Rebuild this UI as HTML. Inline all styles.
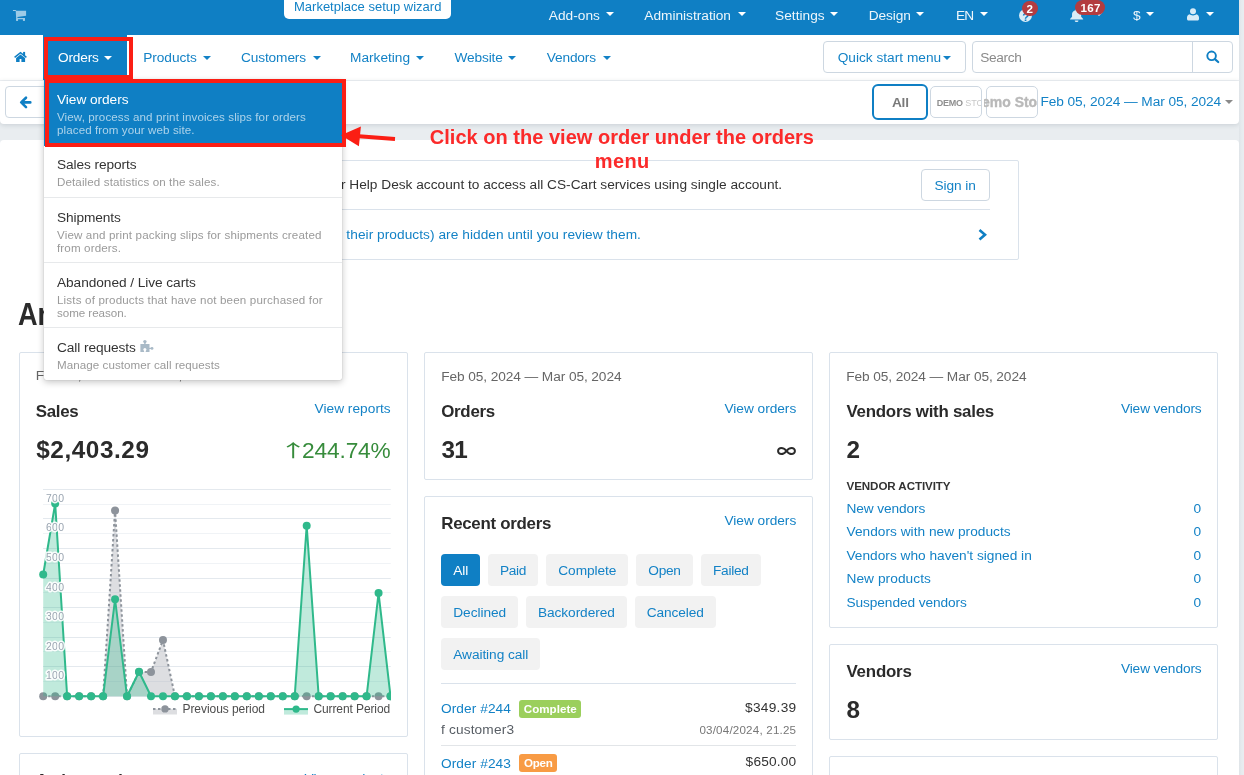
<!DOCTYPE html>
<html lang="en">
<head>
<meta charset="utf-8">
<title>Dashboard - Administration panel</title>
<style>
html,body{margin:0;padding:0}
body{width:1244px;height:775px;overflow:hidden;background:#e9edf0;font-family:"Liberation Sans",Arial,sans-serif;font-size:13px;position:relative}
.b{position:absolute;box-sizing:border-box;display:block}
.t{position:absolute;display:block;white-space:nowrap;height:20px;line-height:20px;margin:0;padding:0;font-weight:normal;text-decoration:none;font-style:normal}
#page{position:absolute;left:0;top:0;width:1239px;height:775px;overflow:hidden;will-change:transform}
ul,li{list-style:none;margin:0;padding:0}
</style>
</head>
<body>
<div id="page">
<header id="topbar"><div class="b" style="left:0px;top:0px;width:1239px;height:35px;background:#0f7fc4"></div>
<svg class="b" style="left:12px;top:9px;" width="15" height="13" viewBox="12 9 15 13" preserveAspectRatio="none"><g fill="#9ccbe7"><path d="M12.900 9.900h2.800l.7 1.100H13z"/><path d="M15.700 10.700h10.400v5L17.400 16.900l.2 1h7.400v1.300H16.200z"/><rect x="16" y="18.800" width="2.100" height="2.100" rx=".6"/><rect x="22.900" y="18.800" width="2.100" height="2.100" rx=".6"/></g></svg>
<a class="b" style="left:283.75px;top:0px;width:167.5px;height:18.75px;background:#fff;border-radius:0 0 5px 5px"></a>
<a class="t" style="left:294px;top:-3px;font-size:13px;color:#1382c6;">Marketplace setup wizard</a>
<a class="t" style="left:548.75px;top:6px;font-size:13.7px;color:#eef6fb;letter-spacing:0.03px;">Add-ons</a>
<i class="b" style="left:606px;top:12px;border-left:4px solid transparent;border-right:4px solid transparent;border-top:4px solid #fff"></i>
<a class="t" style="left:644.25px;top:6px;font-size:13.7px;color:#eef6fb;">Administration</a>
<i class="b" style="left:737.5px;top:12px;border-left:4px solid transparent;border-right:4px solid transparent;border-top:4px solid #fff"></i>
<a class="t" style="left:775px;top:6px;font-size:13.7px;color:#eef6fb;letter-spacing:0.03px;">Settings</a>
<i class="b" style="left:830px;top:12px;border-left:4px solid transparent;border-right:4px solid transparent;border-top:4px solid #fff"></i>
<a class="t" style="left:868.75px;top:6px;font-size:13.7px;color:#eef6fb;letter-spacing:-0.11px;">Design</a>
<i class="b" style="left:916px;top:12px;border-left:4px solid transparent;border-right:4px solid transparent;border-top:4px solid #fff"></i>
<a class="t" style="left:956px;top:6px;font-size:13.7px;color:#eef6fb;letter-spacing:-1px;">EN</a>
<i class="b" style="left:979.5px;top:12px;border-left:4px solid transparent;border-right:4px solid transparent;border-top:4px solid #fff"></i>
<div class="b" style="left:1019px;top:9px;width:13px;height:13px;background:#d9ecf7;border-radius:50%"></div>
<span class="t" style="left:1022.2px;top:7px;font-size:11.6px;color:#0f7fc4;font-weight:bold;">?</span>
<div class="b" style="left:1022px;top:1px;width:16px;height:15px;background:#b33c40;border-radius:8px"></div>
<span class="t" style="left:1026.5px;top:-1px;font-size:11.6px;color:#fff;font-weight:bold;">2</span>
<svg class="b" style="left:1068.85px;top:9px;" width="15.2" height="13" viewBox="0 0 26 26" preserveAspectRatio="none"><path fill="#d9ecf7" d="M13 0c1 0 1.8.8 1.8 1.8v.7c3.6.8 6 4 6 7.7v5.3l3.4 4.3v1.4H1.800v-1.4l3.400-4.300V10.200c0-3.700 2.400-6.900 6-7.700v-.7C11.200.8 12 0 13 0zM9.800 22.800h6.400c0 1.800-1.400 3.200-3.200 3.200s-3.200-1.400-3.200-3.200z"/></svg>
<i class="b" style="left:1094.5px;top:12px;border-left:4px solid transparent;border-right:4px solid transparent;border-top:4px solid #fff"></i>
<div class="b" style="left:1075.4px;top:0px;width:29.6px;height:15.2px;background:#b33c40;border-radius:8px"></div>
<span class="t" style="left:1080.5px;top:-2px;font-size:11.6px;color:#fff;font-weight:bold;letter-spacing:0.25px;">167</span>
<span class="t" style="left:1133px;top:6px;font-size:13.7px;color:#eef6fb;letter-spacing:-0.24px;">$</span>
<i class="b" style="left:1146px;top:12px;border-left:4px solid transparent;border-right:4px solid transparent;border-top:4px solid #fff"></i>
<svg class="b" style="left:1187px;top:8.4px;" width="12" height="12.6" viewBox="0 0 24 25" preserveAspectRatio="none"><circle cx="12" cy="6.500" r="6" fill="#d9ecf7"/><path fill="#d9ecf7" d="M5 12.500c2 1.500 4 2.200 7 2.200s5-.7 7-2.200c3 .8 5 3.300 5 6.500v3c0 1.700-1.300 3-3 3H3c-1.700 0-3-1.300-3-3v-3c0-3.200 2-5.700 5-6.500z"/></svg>
<i class="b" style="left:1206px;top:12px;border-left:4px solid transparent;border-right:4px solid transparent;border-top:4px solid #fff"></i></header>
<nav id="navbar"><div class="b" style="left:0px;top:35px;width:1239px;height:46px;background:#fff;border-bottom:1px solid #eef1f4"></div>
<svg class="b" style="left:13px;top:51px;" width="16" height="12" viewBox="13 51 16 12" preserveAspectRatio="none"><g fill="#0f7fc4"><path d="M14.600 57.300L20.500 52.700l5.900 4.600" fill="none" stroke="#0f7fc4" stroke-width="1.500"/><rect x="23.100" y="51.900" width="2" height="4.200"/><path d="M20.500 54.500l4.600 3.600V62h-3.700v-2.900h-1.800V62h-3.500v-3.900z"/></g></svg>
<div class="b" style="left:43px;top:35px;width:84px;height:45px;background:#0f7fc4"></div>
<a class="t" style="left:58px;top:48px;font-size:13.7px;color:#fff;letter-spacing:-0.19px;">Orders</a>
<i class="b" style="left:104px;top:56px;border-left:4px solid transparent;border-right:4px solid transparent;border-top:4px solid #fff"></i>
<a class="t" style="left:143.2px;top:48px;font-size:13.7px;color:#1382c6;letter-spacing:-0.04px;">Products</a>
<i class="b" style="left:203.4px;top:56px;border-left:4px solid transparent;border-right:4px solid transparent;border-top:4px solid #1382c6"></i>
<a class="t" style="left:241px;top:48px;font-size:13.7px;color:#1382c6;letter-spacing:-0.13px;">Customers</a>
<i class="b" style="left:312.5px;top:56px;border-left:4px solid transparent;border-right:4px solid transparent;border-top:4px solid #1382c6"></i>
<a class="t" style="left:350px;top:48px;font-size:13.7px;color:#1382c6;">Marketing</a>
<i class="b" style="left:415.75px;top:56px;border-left:4px solid transparent;border-right:4px solid transparent;border-top:4px solid #1382c6"></i>
<a class="t" style="left:454.5px;top:48px;font-size:13.7px;color:#1382c6;letter-spacing:-0.15px;">Website</a>
<i class="b" style="left:508px;top:56px;border-left:4px solid transparent;border-right:4px solid transparent;border-top:4px solid #1382c6"></i>
<a class="t" style="left:546.75px;top:48px;font-size:13.7px;color:#1382c6;letter-spacing:-0.15px;">Vendors</a>
<i class="b" style="left:602.5px;top:56px;border-left:4px solid transparent;border-right:4px solid transparent;border-top:4px solid #1382c6"></i>
<div class="b" style="left:823.4px;top:41px;width:142.5px;height:31.5px;border:1px solid #cdd7e1;border-radius:4px;background:#fff"></div>
<a class="t" style="left:837.7px;top:48px;font-size:13.7px;color:#1382c6;">Quick start menu</a>
<i class="b" style="left:943.4px;top:55.5px;border-left:4px solid transparent;border-right:4px solid transparent;border-top:4px solid #1382c6"></i>
<div class="b" style="left:972px;top:41px;width:261px;height:31.5px;border:1px solid #cdd7e1;border-radius:4px;background:#fff"></div>
<div class="b" style="left:1192px;top:41px;width:1px;height:31.5px;background:#cdd7e1"></div>
<span class="t" style="left:980.2px;top:48px;font-size:13.7px;color:#8a8a8a;letter-spacing:-0.32px;">Search</span>
<svg class="b" style="left:1205px;top:49px;" width="16" height="16" viewBox="0 0 16 16" preserveAspectRatio="none"><circle cx="6.600" cy="6.850" r="4.300" fill="none" stroke="#0f7fc4" stroke-width="1.900"/><path d="M9.900 10.100l3.300 2.900" stroke="#0f7fc4" stroke-width="2.200" stroke-linecap="round"/></svg></nav>
<section id="actions"><div class="b" style="left:0px;top:81px;width:1239px;height:42.5px;background:#fff;border-radius:0 0 4px 4px;box-shadow:0 1px 5px rgba(30,50,70,.16)"></div>
<a class="b" style="left:5px;top:86px;width:43px;height:32px;border:1px solid #cdd7e1;border-radius:4px;background:#fff"></a>
<svg class="b" style="left:16px;top:94px;" width="20" height="17" viewBox="16 94 20 17" preserveAspectRatio="none"><path d="M26 97.700l-4.800 4.700 4.800 4.700M21.500 102.400h8.800" fill="none" stroke="#0f7fc4" stroke-width="2.600" stroke-linecap="round" stroke-linejoin="round"/></svg>
<div class="b" style="left:872px;top:84px;width:55.5px;height:35.5px;border:2px solid #0f7fc4;border-radius:6px;background:#fff"></div>
<span class="t" style="left:892px;top:93px;font-size:13.7px;color:#7a7a7a;font-weight:bold;letter-spacing:-0.27px;">All</span>
<div class="b" style="left:930.3px;top:86px;width:51.4px;height:32px;border:1px solid #cdd7e1;border-radius:5px;background:#fff;overflow:hidden"><span class="t" style="left:5.400px;top:6px;font-size:9px;font-weight:bold;color:#8f8f8f;letter-spacing:-.2px">DEMO <span style="font-weight:normal;color:#c8c8c8;letter-spacing:0">STORE</span></span></div>
<div class="b" style="left:986.2px;top:86px;width:51.4px;height:32px;border:1px solid #cdd7e1;border-radius:5px;background:#fff"></div>
<div class="b" style="left:984px;top:88px;width:53px;height:28px;overflow:hidden"><span class="t" style="left:-12.400px;top:4px;font-size:15px;font-weight:bold;color:#b9b9b9;-webkit-text-stroke:.4px #b9b9b9;transform:scaleX(.93);transform-origin:0 0">Demo Store</span></div>
<a class="t" style="left:1040.4px;top:92px;font-size:13.7px;color:#1382c6;letter-spacing:-0.07px;">Feb 05, 2024 — Mar 05, 2024</a>
<i class="b" style="left:1225px;top:99.5px;border-left:4px solid transparent;border-right:4px solid transparent;border-top:4px solid #8a8a8a"></i></section>
<main id="content"><div class="b" style="left:0px;top:140px;width:1239px;height:660px;background:#fff;border-radius:4px 4px 0 0"></div>
<div class="b" style="left:221px;top:160px;width:797.5px;height:99.5px;border:1px solid #dae2eb;border-radius:2px"></div>
<p class="t" style="left:258px;top:175px;font-size:13.7px;color:#333;">Sign in to your Help Desk account to access all CS-Cart services using single account.</p>
<a class="b" style="left:921px;top:169px;width:68.5px;height:31.5px;border:1px solid #cdd7e1;border-radius:4px;background:#fff"></a>
<a class="t" style="left:934.5px;top:176px;font-size:13.7px;color:#1382c6;letter-spacing:-0.1px;">Sign in</a>
<div class="b" style="left:250px;top:209px;width:739.5px;height:1px;background:#dae2eb"></div>
<a class="t" style="left:250.5px;top:225px;font-size:13.7px;color:#1382c6;letter-spacing:0.05px;">2 vendors (and their products) are hidden until you review them.</a>
<svg class="b" style="left:977px;top:227.5px;" width="11" height="13.5" viewBox="0 0 11 13.500" preserveAspectRatio="none"><path d="M2.500 2l5.500 4.700-5.500 4.800" fill="none" stroke="#0f7fc4" stroke-width="2.600" stroke-linecap="butt" stroke-linejoin="miter"/></svg>
<h1 class="t" style="left:17.8px;top:304px;font-size:30.5px;color:#2b2b2b;font-weight:bold;transform:scaleX(.89);transform-origin:0 0;">Analytics</h1>
<div class="b" style="left:19px;top:352px;width:389px;height:385px;border:1px solid #dae2eb;border-radius:2px;background:#fff"></div>
<span class="t" style="left:35.75px;top:366px;font-size:13.7px;color:#666;letter-spacing:-0.09px;">Feb 05, 2024 — Mar 05, 2024</span>
<h2 class="t" style="left:35.75px;top:402px;font-size:16.9px;color:#2b2b2b;font-weight:bold;letter-spacing:-0.31px;">Sales</h2>
<a class="t" style="left:314.5px;top:399px;font-size:13.7px;color:#1382c6;letter-spacing:0.03px;">View reports</a>
<span class="t" style="left:36.25px;top:440px;font-size:24.3px;color:#2b2b2b;font-weight:bold;letter-spacing:0.57px;">$2,403.29</span>
<span class="t" style="left:278.800px;top:441px;font-size:20px;font-family:'Noto Sans CJK SC','DejaVu Sans',sans-serif;color:#378c3c;transform:scale(1.42,.88);transform-origin:0 0">↑</span>
<span class="t" style="left:302px;top:440px;font-size:22.7px;color:#378c3c;letter-spacing:-0.13px;">244.74%</span>
<svg class="b" style="left:20px;top:480px" width="370.750" height="250" viewBox="20 480 370.750 250"><line x1="43" x2="390.750" y1="696.50" y2="696.50" stroke="#e4e9ee" stroke-width="1"/>
<line x1="43" x2="390.750" y1="681.50" y2="681.50" stroke="#f0f3f6" stroke-width="1"/>
<line x1="43" x2="390.750" y1="666.50" y2="666.50" stroke="#e4e9ee" stroke-width="1"/>
<line x1="43" x2="390.750" y1="651.50" y2="651.50" stroke="#f0f3f6" stroke-width="1"/>
<line x1="43" x2="390.750" y1="637.50" y2="637.50" stroke="#e4e9ee" stroke-width="1"/>
<line x1="43" x2="390.750" y1="622.50" y2="622.50" stroke="#f0f3f6" stroke-width="1"/>
<line x1="43" x2="390.750" y1="607.50" y2="607.50" stroke="#e4e9ee" stroke-width="1"/>
<line x1="43" x2="390.750" y1="592.50" y2="592.50" stroke="#f0f3f6" stroke-width="1"/>
<line x1="43" x2="390.750" y1="578.50" y2="578.50" stroke="#e4e9ee" stroke-width="1"/>
<line x1="43" x2="390.750" y1="563.50" y2="563.50" stroke="#f0f3f6" stroke-width="1"/>
<line x1="43" x2="390.750" y1="548.50" y2="548.50" stroke="#e4e9ee" stroke-width="1"/>
<line x1="43" x2="390.750" y1="533.50" y2="533.50" stroke="#f0f3f6" stroke-width="1"/>
<line x1="43" x2="390.750" y1="518.50" y2="518.50" stroke="#e4e9ee" stroke-width="1"/>
<line x1="43" x2="390.750" y1="504.50" y2="504.50" stroke="#f0f3f6" stroke-width="1"/>
<line x1="43" x2="390.750" y1="489.50" y2="489.50" stroke="#e4e9ee" stroke-width="1"/>
<polygon points="43.20,696.30 43.20,696.30 55.18,696.30 67.15,696.30 79.13,696.30 91.11,696.30 103.09,696.30 115.06,510.50 127.04,696.30 139.02,672.00 150.99,672.00 162.97,640.00 174.95,696.30 186.92,696.30 198.90,696.30 210.88,696.30 222.86,696.30 234.83,696.30 246.81,696.30 258.79,696.30 270.76,696.30 282.74,696.30 294.72,696.30 306.69,696.30 318.67,696.30 330.65,696.30 342.62,696.30 354.60,696.30 366.58,696.30 378.56,696.30 390.53,696.30 390.53,696.30" fill="#8d939b" fill-opacity=".3"/>
<polyline points="43.20,696.30 55.18,696.30 67.15,696.30 79.13,696.30 91.11,696.30 103.09,696.30 115.06,510.50 127.04,696.30 139.02,672.00 150.99,672.00 162.97,640.00 174.95,696.30 186.92,696.30 198.90,696.30 210.88,696.30 222.86,696.30 234.83,696.30 246.81,696.30 258.79,696.30 270.76,696.30 282.74,696.30 294.72,696.30 306.69,696.30 318.67,696.30 330.65,696.30 342.62,696.30 354.60,696.30 366.58,696.30 378.56,696.30 390.53,696.30" fill="none" stroke="#8d939b" stroke-width="2" stroke-dasharray="2.500 2.500"/>
<circle cx="43.20" cy="696.30" r="4" fill="#8d939b"/>
<circle cx="55.18" cy="696.30" r="4" fill="#8d939b"/>
<circle cx="67.15" cy="696.30" r="4" fill="#8d939b"/>
<circle cx="79.13" cy="696.30" r="4" fill="#8d939b"/>
<circle cx="91.11" cy="696.30" r="4" fill="#8d939b"/>
<circle cx="103.09" cy="696.30" r="4" fill="#8d939b"/>
<circle cx="115.06" cy="510.50" r="4" fill="#8d939b"/>
<circle cx="127.04" cy="696.30" r="4" fill="#8d939b"/>
<circle cx="139.02" cy="672.00" r="4" fill="#8d939b"/>
<circle cx="150.99" cy="672.00" r="4" fill="#8d939b"/>
<circle cx="162.97" cy="640.00" r="4" fill="#8d939b"/>
<circle cx="174.95" cy="696.30" r="4" fill="#8d939b"/>
<circle cx="186.92" cy="696.30" r="4" fill="#8d939b"/>
<circle cx="198.90" cy="696.30" r="4" fill="#8d939b"/>
<circle cx="210.88" cy="696.30" r="4" fill="#8d939b"/>
<circle cx="222.86" cy="696.30" r="4" fill="#8d939b"/>
<circle cx="234.83" cy="696.30" r="4" fill="#8d939b"/>
<circle cx="246.81" cy="696.30" r="4" fill="#8d939b"/>
<circle cx="258.79" cy="696.30" r="4" fill="#8d939b"/>
<circle cx="270.76" cy="696.30" r="4" fill="#8d939b"/>
<circle cx="282.74" cy="696.30" r="4" fill="#8d939b"/>
<circle cx="294.72" cy="696.30" r="4" fill="#8d939b"/>
<circle cx="306.69" cy="696.30" r="4" fill="#8d939b"/>
<circle cx="318.67" cy="696.30" r="4" fill="#8d939b"/>
<circle cx="330.65" cy="696.30" r="4" fill="#8d939b"/>
<circle cx="342.62" cy="696.30" r="4" fill="#8d939b"/>
<circle cx="354.60" cy="696.30" r="4" fill="#8d939b"/>
<circle cx="366.58" cy="696.30" r="4" fill="#8d939b"/>
<circle cx="378.56" cy="696.30" r="4" fill="#8d939b"/>
<circle cx="390.53" cy="696.30" r="4" fill="#8d939b"/>
<polygon points="43.20,696.30 43.20,574.50 55.18,503.50 67.15,696.30 79.13,696.30 91.11,696.30 103.09,696.30 115.06,599.25 127.04,696.30 139.02,671.75 150.99,696.30 162.97,696.30 174.95,696.30 186.92,696.30 198.90,696.30 210.88,696.30 222.86,696.30 234.83,696.30 246.81,696.30 258.79,696.30 270.76,696.30 282.74,696.30 294.72,696.30 306.69,525.75 318.67,696.30 330.65,696.30 342.62,696.30 354.60,696.30 366.58,696.30 378.56,593.10 390.53,696.30 390.53,696.30" fill="#2fb98b" fill-opacity=".3"/>
<polyline points="43.20,574.50 55.18,503.50 67.15,696.30 79.13,696.30 91.11,696.30 103.09,696.30 115.06,599.25 127.04,696.30 139.02,671.75 150.99,696.30 162.97,696.30 174.95,696.30 186.92,696.30 198.90,696.30 210.88,696.30 222.86,696.30 234.83,696.30 246.81,696.30 258.79,696.30 270.76,696.30 282.74,696.30 294.72,696.30 306.69,525.75 318.67,696.30 330.65,696.30 342.62,696.30 354.60,696.30 366.58,696.30 378.56,593.10 390.53,696.30" fill="none" stroke="#2fb98b" stroke-width="2" stroke-linejoin="round"/>
<circle cx="43.20" cy="574.50" r="4" fill="#2fb98b"/>
<circle cx="55.18" cy="503.50" r="4" fill="#2fb98b"/>
<circle cx="67.15" cy="696.30" r="4" fill="#2fb98b"/>
<circle cx="79.13" cy="696.30" r="4" fill="#2fb98b"/>
<circle cx="91.11" cy="696.30" r="4" fill="#2fb98b"/>
<circle cx="103.09" cy="696.30" r="4" fill="#2fb98b"/>
<circle cx="115.06" cy="599.25" r="4" fill="#2fb98b"/>
<circle cx="127.04" cy="696.30" r="4" fill="#2fb98b"/>
<circle cx="139.02" cy="671.75" r="4" fill="#2fb98b"/>
<circle cx="150.99" cy="696.30" r="4" fill="#2fb98b"/>
<circle cx="162.97" cy="696.30" r="4" fill="#2fb98b"/>
<circle cx="174.95" cy="696.30" r="4" fill="#2fb98b"/>
<circle cx="186.92" cy="696.30" r="4" fill="#2fb98b"/>
<circle cx="198.90" cy="696.30" r="4" fill="#2fb98b"/>
<circle cx="210.88" cy="696.30" r="4" fill="#2fb98b"/>
<circle cx="222.86" cy="696.30" r="4" fill="#2fb98b"/>
<circle cx="234.83" cy="696.30" r="4" fill="#2fb98b"/>
<circle cx="246.81" cy="696.30" r="4" fill="#2fb98b"/>
<circle cx="258.79" cy="696.30" r="4" fill="#2fb98b"/>
<circle cx="270.76" cy="696.30" r="4" fill="#2fb98b"/>
<circle cx="282.74" cy="696.30" r="4" fill="#2fb98b"/>
<circle cx="294.72" cy="696.30" r="4" fill="#2fb98b"/>
<circle cx="306.69" cy="525.75" r="4" fill="#2fb98b"/>
<circle cx="318.67" cy="696.30" r="4" fill="#2fb98b"/>
<circle cx="330.65" cy="696.30" r="4" fill="#2fb98b"/>
<circle cx="342.62" cy="696.30" r="4" fill="#2fb98b"/>
<circle cx="354.60" cy="696.30" r="4" fill="#2fb98b"/>
<circle cx="366.58" cy="696.30" r="4" fill="#2fb98b"/>
<circle cx="378.56" cy="593.10" r="4" fill="#2fb98b"/>
<circle cx="390.53" cy="696.30" r="4" fill="#2fb98b"/>
<text x="46" y="679.00" font-family="Liberation Sans,Arial,sans-serif" font-size="10.500" fill="#9aa5b1" stroke="#fff" stroke-width="3" stroke-opacity=".9" paint-order="stroke" stroke-linejoin="round" textLength="18">100</text>
<text x="46" y="650.00" font-family="Liberation Sans,Arial,sans-serif" font-size="10.500" fill="#9aa5b1" stroke="#fff" stroke-width="3" stroke-opacity=".9" paint-order="stroke" stroke-linejoin="round" textLength="18">200</text>
<text x="46" y="620.00" font-family="Liberation Sans,Arial,sans-serif" font-size="10.500" fill="#9aa5b1" stroke="#fff" stroke-width="3" stroke-opacity=".9" paint-order="stroke" stroke-linejoin="round" textLength="18">300</text>
<text x="46" y="591.00" font-family="Liberation Sans,Arial,sans-serif" font-size="10.500" fill="#9aa5b1" stroke="#fff" stroke-width="3" stroke-opacity=".9" paint-order="stroke" stroke-linejoin="round" textLength="18">400</text>
<text x="46" y="561.00" font-family="Liberation Sans,Arial,sans-serif" font-size="10.500" fill="#9aa5b1" stroke="#fff" stroke-width="3" stroke-opacity=".9" paint-order="stroke" stroke-linejoin="round" textLength="18">500</text>
<text x="46" y="531.00" font-family="Liberation Sans,Arial,sans-serif" font-size="10.500" fill="#9aa5b1" stroke="#fff" stroke-width="3" stroke-opacity=".9" paint-order="stroke" stroke-linejoin="round" textLength="18">600</text>
<text x="46" y="502.00" font-family="Liberation Sans,Arial,sans-serif" font-size="10.500" fill="#9aa5b1" stroke="#fff" stroke-width="3" stroke-opacity=".9" paint-order="stroke" stroke-linejoin="round" textLength="18">700</text>
<rect x="153" y="708.900" width="24" height="5.600" fill="#8d939b" fill-opacity=".3"/>
<line x1="153" x2="177" y1="708.900" y2="708.900" stroke="#8d939b" stroke-width="2" stroke-dasharray="2.500 2.500"/>
<circle cx="165" cy="708.900" r="3.700" fill="#8d939b"/>
<rect x="284" y="709" width="24" height="5.600" fill="#2fb98b" fill-opacity=".3"/>
<line x1="284" x2="308" y1="709.100" y2="709.100" stroke="#2fb98b" stroke-width="2"/>
<circle cx="296.100" cy="709.100" r="3.600" fill="#2fb98b"/>
<text x="182.500" y="712.700" font-family="Liberation Sans,Arial,sans-serif" font-size="12" fill="#4d4d4d" textLength="82.500">Previous period</text>
<text x="313.400" y="712.700" font-family="Liberation Sans,Arial,sans-serif" font-size="12" fill="#4d4d4d" textLength="76.800">Current Period</text></svg>
<div class="b" style="left:19px;top:753px;width:389px;height:147px;border:1px solid #dae2eb;border-radius:2px;background:#fff"></div>
<h2 class="t" style="left:35.75px;top:771px;font-size:16.9px;color:#2b2b2b;font-weight:bold;letter-spacing:-0.59px;">Active products</h2>
<a class="t" style="left:304.5px;top:769px;font-size:13.7px;color:#1382c6;letter-spacing:0.03px;">View products</a>
<div class="b" style="left:424px;top:352px;width:389px;height:128px;border:1px solid #dae2eb;border-radius:2px;background:#fff"></div>
<span class="t" style="left:441.25px;top:367px;font-size:13.7px;color:#666;letter-spacing:-0.09px;">Feb 05, 2024 — Mar 05, 2024</span>
<h2 class="t" style="left:441.25px;top:402px;font-size:16.9px;color:#2b2b2b;font-weight:bold;letter-spacing:-0.3px;">Orders</h2>
<a class="t" style="left:724.5px;top:399px;font-size:13.7px;color:#1382c6;letter-spacing:-0.03px;">View orders</a>
<span class="t" style="left:441.5px;top:440px;font-size:24.3px;color:#2b2b2b;font-weight:bold;letter-spacing:-0.78px;">31</span>
<span class="t" style="left:776.400px;top:441px;font-size:20px;font-weight:bold;font-family:'Noto Sans CJK SC','DejaVu Sans',sans-serif;color:#2b2b2b">∞</span>
<div class="b" style="left:424px;top:496px;width:389px;height:404px;border:1px solid #dae2eb;border-radius:2px;background:#fff"></div>
<h2 class="t" style="left:441.25px;top:514px;font-size:16.9px;color:#2b2b2b;font-weight:bold;letter-spacing:-0.29px;">Recent orders</h2>
<a class="t" style="left:724.5px;top:511px;font-size:13.7px;color:#1382c6;letter-spacing:-0.03px;">View orders</a>
<a class="b" style="left:441px;top:554.25px;width:38.75px;height:31.5px;background:#0f7fc4;border-radius:4px"></a><a class="t" style="left:453.25px;top:561px;font-size:13.7px;color:#fff;letter-spacing:-0.09px;">All</a>
<a class="b" style="left:488px;top:554.25px;width:49.75px;height:31.5px;background:#f2f2f2;border-radius:4px"></a><a class="t" style="left:500px;top:561px;font-size:13.7px;color:#1382c6;letter-spacing:-0.31px;">Paid</a>
<a class="b" style="left:546px;top:554.25px;width:81.5px;height:31.5px;background:#f2f2f2;border-radius:4px"></a><a class="t" style="left:558.25px;top:561px;font-size:13.7px;color:#1382c6;letter-spacing:-0.05px;">Complete</a>
<a class="b" style="left:635.75px;top:554.25px;width:56.75px;height:31.5px;background:#f2f2f2;border-radius:4px"></a><a class="t" style="left:648.25px;top:561px;font-size:13.7px;color:#1382c6;letter-spacing:-0.26px;">Open</a>
<a class="b" style="left:700.75px;top:554.25px;width:60px;height:31.5px;background:#f2f2f2;border-radius:4px"></a><a class="t" style="left:713px;top:561px;font-size:13.7px;color:#1382c6;letter-spacing:-0.27px;">Failed</a>
<a class="b" style="left:441px;top:596.25px;width:76.75px;height:31.25px;background:#f2f2f2;border-radius:4px"></a><a class="t" style="left:453.25px;top:603px;font-size:13.7px;color:#1382c6;letter-spacing:-0.04px;">Declined</a>
<a class="b" style="left:526px;top:596.25px;width:100.5px;height:31.25px;background:#f2f2f2;border-radius:4px"></a><a class="t" style="left:538px;top:603px;font-size:13.7px;color:#1382c6;letter-spacing:-0.08px;">Backordered</a>
<a class="b" style="left:634.75px;top:596.25px;width:80.75px;height:31.25px;background:#f2f2f2;border-radius:4px"></a><a class="t" style="left:646.75px;top:603px;font-size:13.7px;color:#1382c6;letter-spacing:-0.11px;">Canceled</a>
<a class="b" style="left:441px;top:638px;width:98.75px;height:31.5px;background:#f2f2f2;border-radius:4px"></a><a class="t" style="left:453.25px;top:645px;font-size:13.7px;color:#1382c6;letter-spacing:-0.07px;">Awaiting call</a>
<div class="b" style="left:441px;top:683px;width:355px;height:1px;background:#dae2eb"></div>
<a class="t" style="left:441px;top:699px;font-size:13.7px;color:#1382c6;letter-spacing:0.07px;">Order #244</a>
<div class="b" style="left:519px;top:700px;width:61.5px;height:17.5px;background:#9bcf5c;border-radius:3px"></div>
<span class="t" style="left:523.75px;top:699px;font-size:11.6px;color:#fff;font-weight:bold;letter-spacing:0.03px;">Complete</span>
<span class="t" style="left:745px;top:698px;font-size:13.7px;color:#333;letter-spacing:0.28px;">$349.39</span>
<span class="t" style="left:441px;top:720px;font-size:13.7px;color:#585e65;letter-spacing:0.15px;">f customer3</span>
<span class="t" style="left:699.4px;top:720px;font-size:11.6px;color:#777;letter-spacing:0.2px;">03/04/2024, 21.25</span>
<div class="b" style="left:441px;top:745px;width:355px;height:1px;background:#e2e5e8"></div>
<a class="t" style="left:441px;top:754px;font-size:13.7px;color:#1382c6;letter-spacing:0.07px;">Order #243</a>
<div class="b" style="left:519.4px;top:754.2px;width:37.4px;height:17.6px;background:#f89b44;border-radius:3px"></div>
<span class="t" style="left:524px;top:753px;font-size:11.6px;color:#fff;font-weight:bold;letter-spacing:-0.27px;">Open</span>
<span class="t" style="left:745.6px;top:752px;font-size:13.7px;color:#333;letter-spacing:0.19px;">$650.00</span>
<div class="b" style="left:829px;top:352px;width:389px;height:276px;border:1px solid #dae2eb;border-radius:2px;background:#fff"></div>
<span class="t" style="left:846.25px;top:367px;font-size:13.7px;color:#666;letter-spacing:-0.09px;">Feb 05, 2024 — Mar 05, 2024</span>
<h2 class="t" style="left:846.5px;top:402px;font-size:16.9px;color:#2b2b2b;font-weight:bold;letter-spacing:-0.26px;">Vendors with sales</h2>
<a class="t" style="left:1120.9px;top:399px;font-size:13.7px;color:#1382c6;letter-spacing:-0.1px;">View vendors</a>
<span class="t" style="left:846.5px;top:440px;font-size:24.3px;color:#2b2b2b;font-weight:bold;letter-spacing:0.45px;">2</span>
<h3 class="t" style="left:846.5px;top:476px;font-size:11.6px;color:#333;font-weight:bold;letter-spacing:-0.08px;">VENDOR ACTIVITY</h3>
<a class="t" style="left:846.5px;top:499px;font-size:13.7px;color:#1382c6;letter-spacing:-0.11px;">New vendors</a>
<a class="t" style="left:1193.6px;top:499px;font-size:13.7px;color:#1382c6;letter-spacing:0.36px;">0</a>
<a class="t" style="left:846.5px;top:522px;font-size:13.7px;color:#1382c6;letter-spacing:0.02px;">Vendors with new products</a>
<a class="t" style="left:1193.6px;top:522px;font-size:13.7px;color:#1382c6;letter-spacing:0.36px;">0</a>
<a class="t" style="left:846.5px;top:546px;font-size:13.7px;color:#1382c6;">Vendors who haven't signed in</a>
<a class="t" style="left:1193.6px;top:546px;font-size:13.7px;color:#1382c6;letter-spacing:0.36px;">0</a>
<a class="t" style="left:846.5px;top:569px;font-size:13.7px;color:#1382c6;letter-spacing:0.06px;">New products</a>
<a class="t" style="left:1193.6px;top:569px;font-size:13.7px;color:#1382c6;letter-spacing:0.36px;">0</a>
<a class="t" style="left:846.5px;top:593px;font-size:13.7px;color:#1382c6;letter-spacing:-0.09px;">Suspended vendors</a>
<a class="t" style="left:1193.6px;top:593px;font-size:13.7px;color:#1382c6;letter-spacing:0.36px;">0</a>
<div class="b" style="left:829px;top:644px;width:389px;height:95.5px;border:1px solid #dae2eb;border-radius:2px;background:#fff"></div>
<h2 class="t" style="left:846.5px;top:662px;font-size:16.9px;color:#2b2b2b;font-weight:bold;letter-spacing:-0.22px;">Vendors</h2>
<a class="t" style="left:1120.9px;top:659px;font-size:13.7px;color:#1382c6;letter-spacing:-0.1px;">View vendors</a>
<span class="t" style="left:846.5px;top:700px;font-size:24.3px;color:#2b2b2b;font-weight:bold;letter-spacing:1.5px;">8</span>
<div class="b" style="left:829px;top:756px;width:389px;height:144px;border:1px solid #dae2eb;border-radius:2px;background:#fff"></div></main>
<div id="orders-menu"><div class="b" style="left:44px;top:80px;width:298px;height:300px;background:#fff;border-radius:0 0 2px 2px;box-shadow:0 2px 7px rgba(0,0,0,.24),0 0 1px rgba(0,0,0,.3)"></div>
<div class="b" style="left:44px;top:80px;width:298px;height:66px;background:#0f7fc4"></div>
<div class="b" style="left:44px;top:197px;width:298px;height:1px;background:#e7e9eb"></div>
<div class="b" style="left:44px;top:262px;width:298px;height:1px;background:#e7e9eb"></div>
<div class="b" style="left:44px;top:327px;width:298px;height:1px;background:#e7e9eb"></div>
<a class="t" style="left:57px;top:90px;font-size:13.7px;color:#fff;letter-spacing:-0.05px;">View orders</a>
<span class="t" style="left:57px;top:107px;font-size:11.6px;color:#add3ea;letter-spacing:0.1px;">View, process and print invoices slips for orders</span>
<span class="t" style="left:57px;top:120px;font-size:11.6px;color:#add3ea;letter-spacing:0.09px;">placed from your web site.</span>
<a class="t" style="left:57px;top:155px;font-size:13.7px;color:#333;letter-spacing:-0.09px;">Sales reports</a>
<span class="t" style="left:57px;top:172px;font-size:11.6px;color:#9a9a9a;letter-spacing:0.11px;">Detailed statistics on the sales.</span>
<a class="t" style="left:57px;top:208px;font-size:13.7px;color:#333;letter-spacing:-0.11px;">Shipments</a>
<span class="t" style="left:57px;top:225px;font-size:11.6px;color:#9a9a9a;letter-spacing:0.14px;">View and print packing slips for shipments created</span>
<span class="t" style="left:57px;top:238px;font-size:11.6px;color:#9a9a9a;letter-spacing:0.13px;">from orders.</span>
<a class="t" style="left:57px;top:273px;font-size:13.7px;color:#333;letter-spacing:-0.06px;">Abandoned / Live carts</a>
<span class="t" style="left:57px;top:290px;font-size:11.6px;color:#9a9a9a;letter-spacing:0.16px;">Lists of products that have not been purchased for</span>
<span class="t" style="left:57px;top:303px;font-size:11.6px;color:#9a9a9a;letter-spacing:-0.04px;">some reason.</span>
<a class="t" style="left:57px;top:338px;font-size:13.7px;color:#333;letter-spacing:-0.09px;">Call requests</a>
<svg class="b" style="left:139px;top:339px;" width="16" height="14" viewBox="139 339 16 14" preserveAspectRatio="none"><g fill="#a9bac7"><rect x="140.400" y="344" width="9.100" height="8"/><circle cx="144.900" cy="341.600" r="1.700"/><rect x="144.200" y="342" width="1.400" height="2.500"/><circle cx="152" cy="348.400" r="1.450"/><rect x="149" y="347.800" width="2.500" height="1.200"/></g><g fill="#fff"><circle cx="144.900" cy="349.400" r="1.500"/><rect x="144.100" y="350" width="1.600" height="2.200"/></g></svg>
<span class="t" style="left:57px;top:355px;font-size:11.6px;color:#9a9a9a;letter-spacing:0.06px;">Manage customer call requests</span></div>
<div id="annotation"><div class="b" style="left:43.5px;top:37.4px;width:89.5px;height:41.3px;border:4px solid #fb1e14"></div>
<div class="b" style="left:45px;top:79px;width:300.5px;height:67.75px;border:4px solid #fb1e14"></div>
<svg class="b" style="left:338px;top:122px;" width="60" height="28" viewBox="338 122 60 28" preserveAspectRatio="none"><path d="M395 139L359 136.350" stroke="#fb1e14" stroke-width="4" fill="none"/><path d="M340.900 135.300L360.900 126.600l-2 19.600z" fill="#fb1e14"/></svg>
<span class="t" style="left:429.8px;top:127px;font-size:20px;color:#fb2a2a;font-weight:bold;letter-spacing:0.02px;">Click on the view order under the orders</span>
<span class="t" style="left:594.8px;top:151px;font-size:20px;color:#fb2a2a;font-weight:bold;letter-spacing:0.34px;">menu</span></div>
</div>
<div class="b" style="left:1239px;top:0px;width:5px;height:775px;background:linear-gradient(90deg,#dfe4e8,#e8ecef 60%,#e9edf0)"></div>
</body>
</html>
